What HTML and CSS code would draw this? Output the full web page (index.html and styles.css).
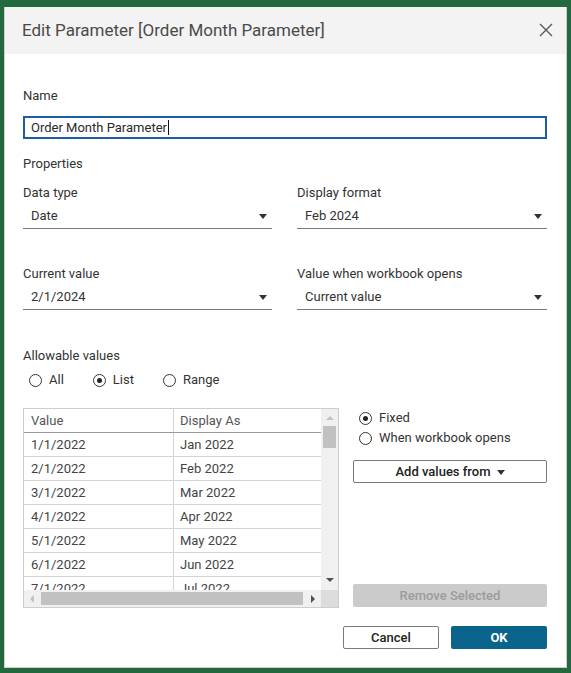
FILE: index.html
```html
<!DOCTYPE html>
<html>
<head>
<meta charset="utf-8">
<title>Edit Parameter</title>
<link rel="stylesheet" href="styles.css">
</head>
<body>
<div class="dialog">
  <div class="header">
    <div class="title">Edit Parameter [Order Month Parameter]</div>
    <svg class="close" width="14" height="14" viewBox="0 0 14 14"><path d="M1 1L13 13M13 1L1 13" stroke="#555" stroke-width="1.3" fill="none"/></svg>
  </div>
  <div class="content">
    <div class="label name-label">Name</div>
    <div class="text-input">Order Month Parameter<span class="caret"></span></div>

    <div class="label section">Properties</div>

    <div class="two-col first-row">
      <div class="field">
        <div class="label">Data type</div>
        <div class="select"><span>Date</span><span class="tri"></span></div>
      </div>
      <div class="field">
        <div class="label">Display format</div>
        <div class="select"><span>Feb 2024</span><span class="tri"></span></div>
      </div>
    </div>

    <div class="two-col second-row">
      <div class="field">
        <div class="label">Current value</div>
        <div class="select"><span>2/1/2024</span><span class="tri"></span></div>
      </div>
      <div class="field">
        <div class="label">Value when workbook opens</div>
        <div class="select"><span>Current value</span><span class="tri"></span></div>
      </div>
    </div>

    <div class="label allow-label">Allowable values</div>
    <div class="radio-row">
      <div class="radio-item"><span class="radio"></span>All</div>
      <div class="radio-item"><span class="radio checked"></span>List</div>
      <div class="radio-item"><span class="radio"></span>Range</div>
    </div>

    <div class="list-area">
      <div class="list">
        <div class="list-main">
          <div class="list-view">
            <div class="row head"><div class="c1">Value</div><div class="c2">Display As</div></div>
            <div class="row"><div class="c1">1/1/2022</div><div class="c2">Jan 2022</div></div>
            <div class="row"><div class="c1">2/1/2022</div><div class="c2">Feb 2022</div></div>
            <div class="row"><div class="c1">3/1/2022</div><div class="c2">Mar 2022</div></div>
            <div class="row"><div class="c1">4/1/2022</div><div class="c2">Apr 2022</div></div>
            <div class="row"><div class="c1">5/1/2022</div><div class="c2">May 2022</div></div>
            <div class="row"><div class="c1">6/1/2022</div><div class="c2">Jun 2022</div></div>
            <div class="row"><div class="c1">7/1/2022</div><div class="c2">Jul 2022</div></div>
          </div>
          <div class="vscroll">
            <span class="arr-up"></span>
            <span class="vthumb"></span>
            <span class="vspace"></span>
            <span class="arr-down"></span>
          </div>
        </div>
        <div class="list-bottom">
          <div class="hscroll">
            <span class="arr-left"></span>
            <span class="hthumb"></span>
            <span class="arr-right"></span>
          </div>
          <div class="corner"></div>
        </div>
      </div>

      <div class="list-side">
        <div class="side-radio"><span class="radio checked"></span>Fixed</div>
        <div class="side-radio"><span class="radio"></span>When workbook opens</div>
        <div class="btn add-btn">Add values from <span class="btn-tri"></span></div>
        <div class="side-spacer"></div>
        <div class="btn remove-btn">Remove Selected</div>
      </div>
    </div>

    <div class="footer">
      <div class="btn cancel-btn">Cancel</div>
      <div class="btn ok-btn">OK</div>
    </div>
  </div>
</div>
</body>
</html>
```
FILE: styles.css
```css
html, body {
  margin: 0;
  padding: 0;
}
body {
  background: #226a3e;
  width: 571px;
  height: 673px;
  padding: 7px 0 0 4px;
  box-sizing: border-box;
  font-family: Roboto, "Liberation Sans", sans-serif;
  font-size: 13px;
  color: #333;
}
.dialog {
  width: 563px;
  height: 661px;
  box-sizing: border-box;
  border: 1px solid #cfcfcf;
  border-top: none;
  background: #fff;
  display: flex;
  flex-direction: column;
}
.header {
  height: 46px;
  background: #f3f3f3;
  display: flex;
  align-items: center;
  justify-content: space-between;
  padding: 0 13px 1px 17px;
  flex-shrink: 0;
}
.title {
  font-size: 17px;
  color: #4a4a4a;
  font-weight: 400;
}
.close {
  display: block;
}
.content {
  padding: 0 19px 0 18px;
  display: flex;
  flex-direction: column;
}
.label {
  line-height: 16px;
  height: 16px;
  color: #333;
}
.name-label {
  margin-top: 34px;
}
.text-input {
  margin-top: 12px;
  height: 23px;
  box-sizing: border-box;
  border: 2px solid #1d5ca6;
  line-height: 19px;
  padding-left: 6px;
  color: #2a2a2a;
  display: flex;
  align-items: center;
}
.caret {
  display: inline-block;
  width: 1px;
  height: 15px;
  background: #111;
  margin-left: 1px;
}
.section {
  margin-top: 17px;
}
.two-col {
  display: grid;
  grid-template-columns: 249px 250px;
  column-gap: 25px;
}
.first-row {
  margin-top: 13px;
}
.second-row {
  margin-top: 37px;
}
.select {
  margin-top: 3px;
  height: 25px;
  box-sizing: border-box;
  border-bottom: 1px solid #7a7a7a;
  display: flex;
  align-items: center;
  justify-content: space-between;
  padding: 0 5px 0 8px;
  line-height: 24px;
  color: #333;
}
.tri {
  width: 0;
  height: 0;
  border-left: 4.5px solid transparent;
  border-right: 4.5px solid transparent;
  border-top: 5px solid #333;
}
.allow-label {
  margin-top: 38px;
}
.radio-row {
  margin-top: 8px;
  height: 16px;
  display: flex;
  align-items: center;
  padding-left: 6px;
  gap: 29px;
}
.radio-item, .side-radio {
  display: flex;
  align-items: center;
  line-height: 16px;
}
.radio {
  width: 13px;
  height: 13px;
  box-sizing: border-box;
  border: 1px solid #333;
  border-radius: 50%;
  margin-right: 7px;
  display: flex;
  align-items: center;
  justify-content: center;
  background: #fff;
}
.radio.checked::after {
  content: "";
  width: 5px;
  height: 5px;
  border-radius: 50%;
  background: #222;
}
.list-area {
  margin-top: 20px;
  display: flex;
  gap: 14px;
}
.list {
  width: 316px;
  height: 200px;
  box-sizing: border-box;
  border: 1px solid #cdcdcd;
  display: flex;
  flex-direction: column;
}
.list-main {
  height: 181px;
  display: flex;
}
.list-view {
  flex: 1;
  overflow: hidden;
}
.row {
  height: 24px;
  box-sizing: border-box;
  border-bottom: 1px solid #d4d4d4;
  display: grid;
  grid-template-columns: 150px 1fr;
  line-height: 23px;
  color: #444;
}
.row.head {
  border-bottom: 1px solid #9a9a9a;
  color: #555;
}
.c1 {
  border-right: 1px solid #d4d4d4;
  padding-left: 7px;
}
.c2 {
  padding-left: 6px;
}
.vscroll {
  width: 17px;
  background: #f0f0f0;
  display: flex;
  flex-direction: column;
  align-items: center;
}
.arr-up {
  margin-top: 7px;
  width: 0;
  height: 0;
  border-left: 4px solid transparent;
  border-right: 4px solid transparent;
  border-bottom: 4px solid #c2c2c2;
}
.vthumb {
  margin-top: 6px;
  width: 13px;
  height: 22px;
  background: #c1c1c1;
}
.vspace {
  flex: 1;
}
.arr-down {
  margin-bottom: 8px;
  width: 0;
  height: 0;
  border-left: 4px solid transparent;
  border-right: 4px solid transparent;
  border-top: 4px solid #505050;
}
.list-bottom {
  height: 17px;
  display: flex;
}
.hscroll {
  flex: 1;
  background: #f0f0f0;
  display: flex;
  align-items: center;
}
.arr-left {
  margin-left: 6px;
  width: 0;
  height: 0;
  border-top: 4px solid transparent;
  border-bottom: 4px solid transparent;
  border-right: 4px solid #c2c2c2;
}
.hthumb {
  margin-left: 7px;
  width: 262px;
  height: 13px;
  background: #c1c1c1;
}
.arr-right {
  margin-left: 8px;
  width: 0;
  height: 0;
  border-top: 4px solid transparent;
  border-bottom: 4px solid transparent;
  border-left: 4px solid #505050;
}
.corner {
  width: 17px;
  background: #dcdcdc;
}
.list-side {
  flex: 1;
  display: flex;
  flex-direction: column;
}
.side-radio {
  height: 20px;
  padding-left: 6px;
}
.btn {
  height: 23px;
  box-sizing: border-box;
  display: flex;
  align-items: center;
  justify-content: center;
  font-weight: 500;
  border-radius: 2px;
}
.add-btn {
  margin-top: 12px;
  border: 1px solid #7a7a7a;
  color: #222;
  gap: 6px;
}
.btn-tri {
  width: 0;
  height: 0;
  border-left: 4px solid transparent;
  border-right: 4px solid transparent;
  border-top: 5px solid #333;
  margin-top: 1px;
}
.side-spacer {
  flex: 1;
}
.remove-btn {
  margin-bottom: 1px;
  background: #cbcbcb;
  color: #9c9c9c;
}
.footer {
  margin-top: 18px;
  display: flex;
  justify-content: flex-end;
  gap: 12px;
}
.cancel-btn {
  width: 96px;
  border: 1px solid #7a7a7a;
  color: #222;
}
.ok-btn {
  width: 96px;
  background: #0b648c;
  color: #fff;
  font-weight: 700;
}
```
